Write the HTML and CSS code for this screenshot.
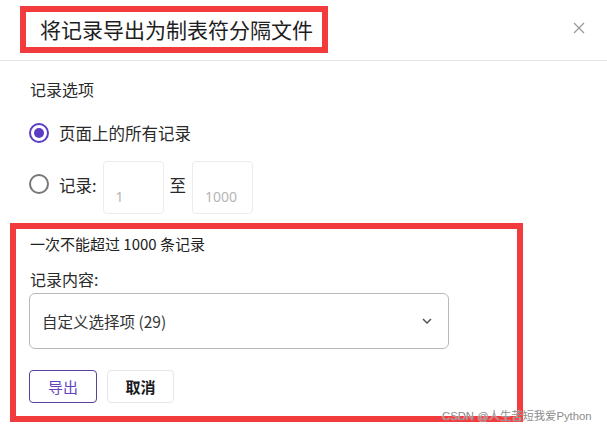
FILE: index.html
```html
<!DOCTYPE html>
<html lang="zh">
<head>
    <meta charset="UTF-8">
    <meta name="viewport" content="width=device-width,initial-scale=1">
    <title>导出记录</title>
    <link rel="stylesheet" href="styles.css">
</head>

<body>
<div class="dialog">
    <div class="header">
        <div class="title">将记录导出为制表符分隔文件</div>
        <div class="close">
            <svg width="12" height="12" viewBox="0 0 12 12">
                <path d="M1 1 L11 11 M11 1 L1 11" stroke="#9a9a9a" stroke-width="1.3" fill="none"/>
            </svg>
        </div>
    </div>

    <div class="body">
        <div class="label">记录选项</div>

        <div class="radio-row">
            <span class="radio checked"></span>
            <span class="radio-text">页面上的所有记录</span>
        </div>

        <div class="radio-row range">
            <span class="radio"></span>
            <span class="radio-text">记录:</span>
            <input class="num" type="text" placeholder="1">
            <span class="radio-text">至</span>
            <input class="num" type="text" placeholder="1000">
        </div>
    </div>

    <div class="mark">
        <div class="hint">一次不能超过 1000 条记录</div>
        <div class="label small">记录内容:</div>

        <div class="select">
            <span>自定义选择项 (29)</span>
            <svg width="10" height="6" viewBox="0 0 10 6">
                <path d="M1 1 L5 5 L9 1" stroke="#555" stroke-width="1.5" fill="none"/>
            </svg>
        </div>

        <div class="buttons">
            <div class="btn primary">导出</div>
            <div class="btn">取消</div>
        </div>
    </div>

    <div class="watermark">CSDN @人生苦短我爱Python</div>
</div>
</body>
</html>
```

FILE: styles.css
```css
* {
    box-sizing: border-box;
}

body {
    margin: 0;
    background-color: #fff;
    font-family: "Noto Sans CJK SC", "Noto Sans", sans-serif;
    color: #222;
}

.dialog {
    position: relative;
    width: 607px;
    height: 433px;
    background-color: #fff;
}

/* 标题 */
.header {
    height: 61px;
    padding: 0 22px 0 20px;
    border-bottom: 1px solid #e3e3e3;
    display: flex;
    align-items: center;
    justify-content: space-between;
}

.header .title {
    width: 308px;
    height: 47px;
    margin-top: -1px;
    padding: 0 0 0 14px;
    border: 6px solid #f23b3d;
    font-size: 21px;
    line-height: 35px;
    white-space: nowrap;
    color: #1e1e1e;
}

.header .close {
    display: flex;
    margin-top: -4px;
}

/* 记录选项 */
.body {
    padding: 16px 0 0 30px;
}

.label {
    font-size: 16px;
    line-height: 24px;
    color: #2a2a2a;
}

.radio-row {
    display: flex;
    align-items: center;
    margin-top: 20px;
    height: 24px;
    margin-left: -1px;
}

.radio-row.range {
    margin-top: 16px;
    height: 53px;
}

.radio {
    width: 20px;
    height: 20px;
    border: 2px solid #777;
    border-radius: 50%;
    margin-right: 10px;
    display: flex;
    align-items: center;
    justify-content: center;
}

.range .radio {
    margin-top: -8px;
}

.radio.checked {
    border-color: #5b3dc4;
}

.radio.checked::after {
    content: "";
    width: 10px;
    height: 10px;
    border-radius: 50%;
    background-color: #5b3dc4;
}

.radio-text {
    font-size: 16.5px;
    line-height: 24px;
    color: #2a2a2a;
}

.range .radio-text {
    margin-top: -6px;
}

.num {
    width: 61px;
    height: 53px;
    margin: 0 6px;
    padding: 18px 12px 0;
    border: 1px solid #ececec;
    border-radius: 4px;
    font-family: "Noto Sans", sans-serif;
    font-size: 14px;
    color: #999;
    outline: none;
}

.num::placeholder {
    color: #b5b5b5;
}

/* 导出内容 */
.mark {
    margin: 9px 0 0 10px;
    width: 513px;
    height: 199px;
    border: 6px solid #f23b3d;
    padding: 4px 13px 0;
}

.hint {
    font-size: 15px;
    line-height: 22px;
    padding-left: 1px;
    color: #222;
}

.label.small {
    margin-top: 13px;
    font-size: 16px;
    line-height: 22px;
    padding-left: 1px;
}

.select {
    margin-top: 3px;
    width: 420px;
    height: 56px;
    border: 1px solid #b9b9b9;
    border-radius: 6px;
    padding: 0 16px 0 12px;
    display: flex;
    align-items: center;
    justify-content: space-between;
    font-size: 15.5px;
    color: #333;
}

.buttons {
    display: flex;
    gap: 10px;
    margin-top: 21px;
}

.btn {
    width: 67px;
    height: 33px;
    border: 1px solid #e6e6e6;
    border-radius: 4px;
    display: flex;
    align-items: center;
    justify-content: center;
    font-size: 15px;
    font-weight: bold;
    color: #1a1a1a;
}

.btn.primary {
    width: 68px;
    border-color: #5a409e;
    color: #6345c2;
    font-weight: normal;
}

.watermark {
    position: absolute;
    left: 442px;
    top: 408px;
    font-size: 11.3px;
    line-height: 16px;
    color: #8c8c8c;
    text-shadow: 0 0 1px #fff;
    font-family: "Liberation Sans", "Noto Sans CJK SC", sans-serif;
}
```
